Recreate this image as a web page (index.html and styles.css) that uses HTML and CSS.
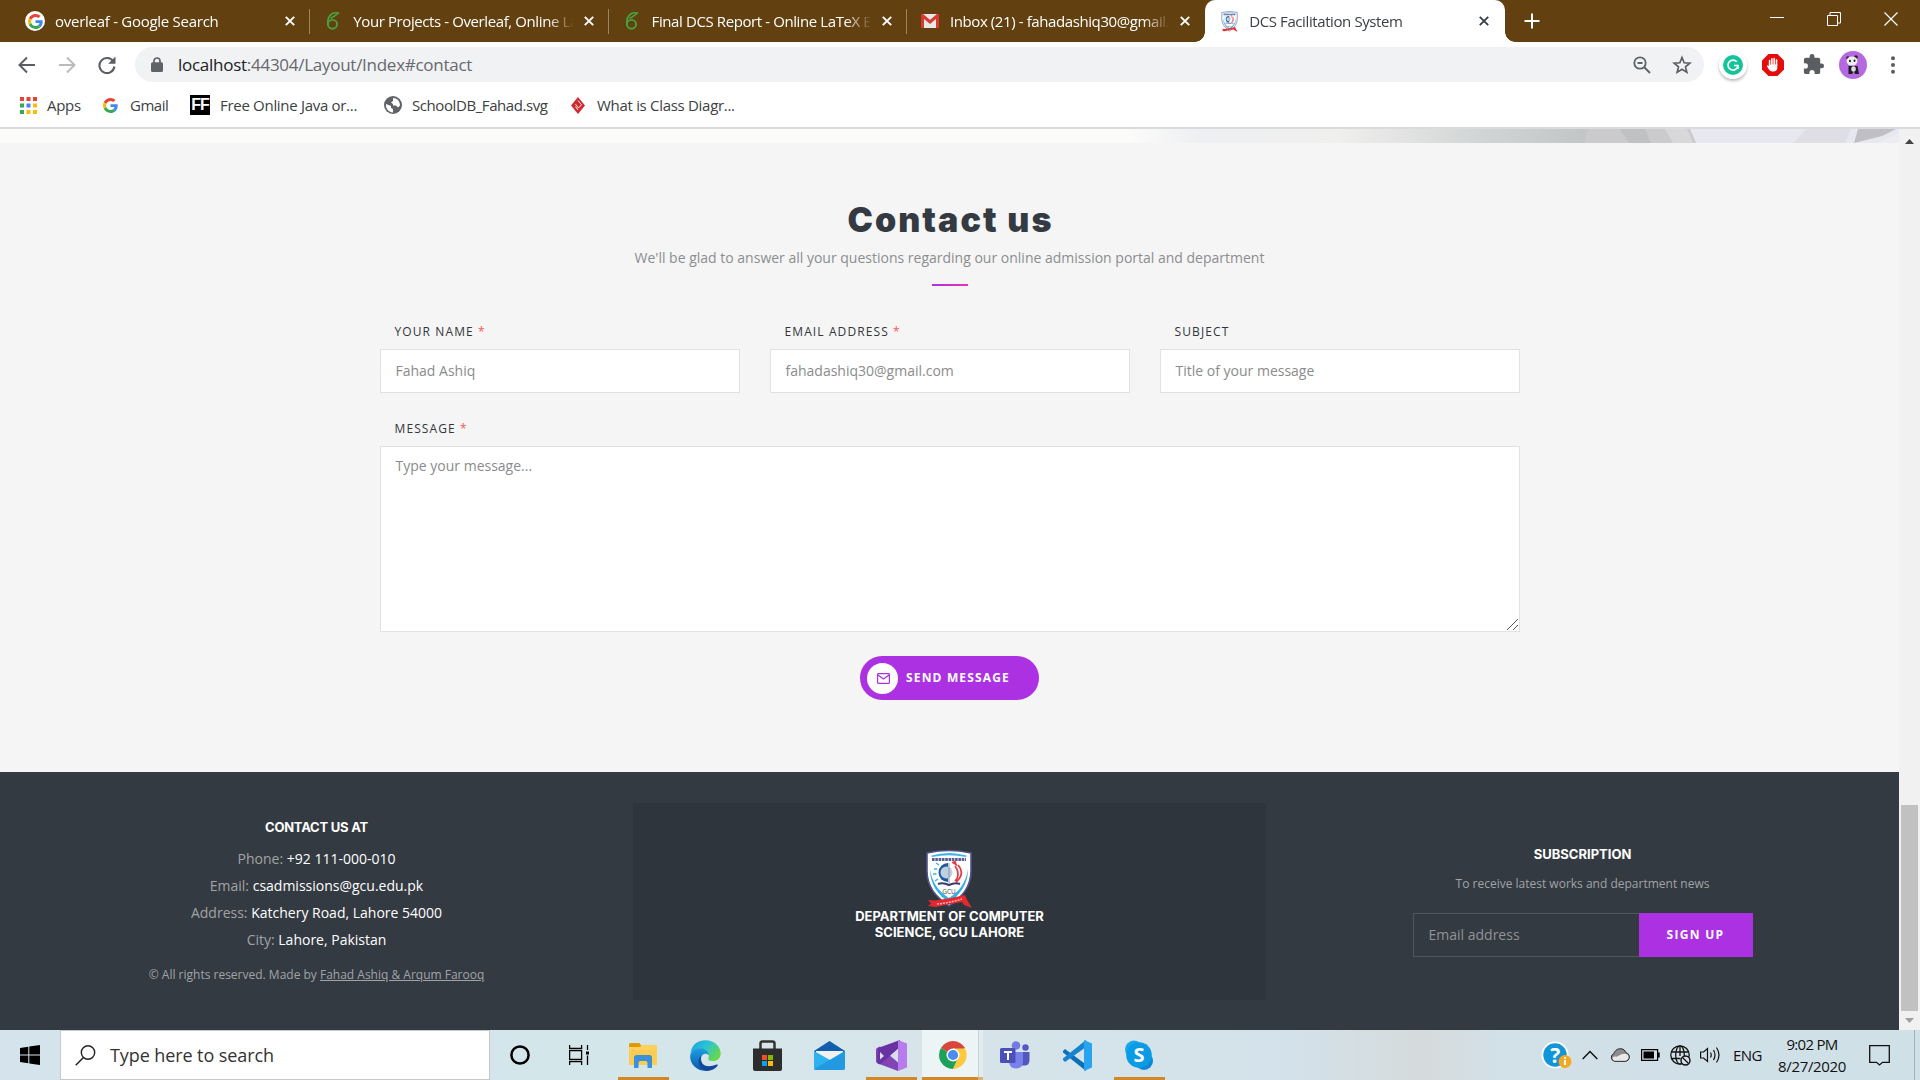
FILE: index.html
```html
<!DOCTYPE html>
<html lang="en">
<head>
<meta charset="utf-8">
<title>DCS Facilitation System</title>
<link rel="stylesheet" href="styles.css">
</head>
<body>
<svg class="defs" width="0" height="0" aria-hidden="true">
  <symbol id="google" viewBox="0 0 48 48">
    <path fill="#EA4335" d="M24 9.500c3.540 0 6.710 1.220 9.210 3.600l6.850-6.850C35.900 2.380 30.470 0 24 0 14.620 0 6.510 5.380 2.560 13.220l7.980 6.190C12.430 13.720 17.740 9.500 24 9.500z"/>
    <path fill="#4285F4" d="M46.980 24.550c0-1.570-.15-3.090-.38-4.550H24v9.020h12.940c-.58 2.960-2.260 5.480-4.780 7.180l7.730 6c4.510-4.180 7.090-10.360 7.090-17.650z"/>
    <path fill="#FBBC05" d="M10.530 28.590c-.48-1.450-.76-2.990-.76-4.590s.27-3.140.76-4.590l-7.980-6.190C.92 16.460 0 20.120 0 24c0 3.880.92 7.540 2.560 10.780l7.970-6.190z"/>
    <path fill="#34A853" d="M24 48c6.480 0 11.930-2.130 15.890-5.810l-7.730-6c-2.150 1.450-4.920 2.300-8.160 2.300-6.260 0-11.570-4.220-13.470-9.910l-7.980 6.190C6.510 42.620 14.620 48 24 48z"/>
  </symbol>
  <symbol id="leaf" viewBox="0 0 20 20">
    <ellipse cx="9.500" cy="13.300" rx="4.600" ry="4.400" fill="none" stroke="#47a141" stroke-width="1.900"/>
    <path d="M4.900 13.500C4.500 9.500 5.500 5 9 2.800 11 1.600 13.500 1.600 16 2c-2.500.6-3.500 3.200-8.500 5.200" fill="none" stroke="#47a141" stroke-width="1.700"/>
  </symbol>
  <symbol id="x" viewBox="0 0 10 10"><path d="M.8.8l8.400 8.400M9.200.8L.8 9.200" stroke="currentColor" stroke-width="1.900"/></symbol>
  <symbol id="crest" viewBox="0 0 48 60">
    <path d="M2 4Q24-1 46 4V22C46 38 37 48 24 57 11 48 2 38 2 22Z" fill="#fff" stroke="#53508c" stroke-width="1.600"/>
    <path d="M6.500 6.500Q24 1.500 41.500 6.500l-.3 1.500Q24 4.500 6.800 8z" fill="#3db4e6"/>
    <path d="M5 20c0 16 8 25 19 34 11-9 19-18 19-34-2 13-8 22-19 29C13 42 7 33 5 20z" fill="#36b0e5"/>
    <path d="M7 10.500h34" stroke="#5d5a94" stroke-width="3.200" stroke-dasharray="2.600 .7"/>
    <path d="M23 14a9.500 9.500 0 0 0 0 19z" fill="#245a98"/>
    <circle cx="21.500" cy="23.500" r="6" fill="#bcd0e2"/>
    <path d="M14 16l-3-2M12 20H9M11.500 25H8M13 30l-3 2" stroke="#3db4e6" stroke-width="1.500"/>
    <path d="M24 14v20" stroke="#8897aa"/>
    <path d="M28 13.500l2-1 1 3zM33 16c5 6 4 12-2 17M30 17c4 5 4 11 0 15" fill="none" stroke="#e13c43" stroke-width="1.700"/>
    <path d="M13 35q5-2 11 1 6-3 11-1" stroke="#383b73" stroke-width="2" fill="none"/>
    <text x="24" y="44.500" text-anchor="middle" class="crest-name">GCU</text>
    <path d="M3 51l7 .5Q24 50 40 46l2 5 5 8-8-3-2-3Q24 55 11 58l-8-1 3-2.500z" fill="#e4282f"/>
    <path d="M12 55q12-1 25-5" stroke="#ffb7b7" stroke-width="1.500" stroke-dasharray="2 1" fill="none"/>
  </symbol>
</svg>

<header class="browser">
  <div class="tabstrip">
    <div class="tab"><span class="fav round"><svg width="15" height="15"><use href="#google"/></svg></span><span class="tab-title wide">overleaf - Google Search</span><svg class="tab-x" width="10" height="10"><use href="#x"/></svg></div>
    <div class="tab"><span class="fav"><svg width="20" height="20"><use href="#leaf"/></svg></span><span class="tab-title">Your Projects - Overleaf, Online LaTeX Editor</span><svg class="tab-x" width="10" height="10"><use href="#x"/></svg></div>
    <div class="tab"><span class="fav"><svg width="20" height="20"><use href="#leaf"/></svg></span><span class="tab-title">Final DCS Report - Online LaTeX Editor</span><svg class="tab-x" width="10" height="10"><use href="#x"/></svg></div>
    <div class="tab last"><span class="fav"><svg width="18" height="14" viewBox="0 0 18 14"><path d="M0 0h18v14H0z" fill="#e8e8e8"/><path d="M1.500 14V1.500L9 8l7.500-6.500V14" fill="none" stroke="#d93a30" stroke-width="3"/></svg></span><span class="tab-title">Inbox (21) - fahadashiq30@gmail.com</span><svg class="tab-x" width="10" height="10"><use href="#x"/></svg></div>
    <div class="tab active"><span class="fav"><svg width="17" height="21"><use href="#crest"/></svg></span><span class="tab-title">DCS Facilitation System</span><svg class="tab-x" width="10" height="10"><use href="#x"/></svg></div>
    <svg class="newtab" width="16" height="16" viewBox="0 0 16 16"><path d="M8 .5v15M.5 8h15" stroke="#fff" stroke-width="2"/></svg>
    <div class="win">
      <svg width="14" height="14" viewBox="0 0 14 14"><path d="M0 5.500h14" stroke="#fff"/></svg>
      <svg width="14" height="14" viewBox="0 0 14 14"><path d="M.5 3.500h10v10H.5zM3 3V.5h10.500V11H11" fill="none" stroke="#fff"/></svg>
      <svg width="14" height="14" viewBox="0 0 14 14"><path d="M.5.5l13 13M13.500.5l-13 13" stroke="#fff" stroke-width="1.200"/></svg>
    </div>
  </div>
  <div class="toolbar">
    <span class="tool"><svg width="18" height="18" viewBox="0 0 18 18"><path d="M17 9H2M9 1.500L1.500 9 9 16.500" fill="none" stroke="#5a5e63" stroke-width="2"/></svg></span>
    <span class="tool"><svg width="18" height="18" viewBox="0 0 18 18"><path d="M1 9h15M9 1.500L16.500 9 9 16.500" fill="none" stroke="#b9bbbe" stroke-width="2"/></svg></span>
    <span class="tool"><svg width="18" height="18" viewBox="0 0 18 18"><path d="M15.300 5.500A7.500 7.500 0 1 0 16.400 10.500" fill="none" stroke="#5a5e63" stroke-width="2.100"/><path d="M17.500.5v7.300h-7.300z" fill="#5a5e63"/></svg></span>
    <div class="omnibox">
      <svg width="12" height="15" viewBox="0 0 12 15"><path d="M3 6V4a3 3 0 0 1 6 0v2" fill="none" stroke="#5f6368" stroke-width="1.700"/><rect y="5.300" width="12" height="9.700" rx="1.500" fill="#5f6368"/></svg>
      <span class="url"><b>localhost</b>:44304/Layout/Index#contact</span>
      <svg width="18" height="18" viewBox="0 0 18 18"><circle cx="7" cy="7" r="5.700" fill="none" stroke="#5f6368" stroke-width="1.800"/><path d="M4.500 7h5M11 11l6 6" stroke="#5f6368" stroke-width="1.900"/></svg>
      <svg class="star" width="20" height="20" viewBox="0 0 24 24"><path d="M12 3l2.600 6.300 6.800.5-5.200 4.400 1.600 6.600L12 17.200l-5.800 3.600 1.600-6.600L2.600 9.800l6.800-.5z" fill="none" stroke="#5a5e63" stroke-width="2"/></svg>
    </div>
    <span class="tool"><svg class="gram" width="28" height="28" viewBox="0 0 28 28"><circle cx="14" cy="14" r="14" fill="#fff"/><circle cx="14" cy="14" r="10" fill="#15c39a"/><path d="M17.800 10.800A5 5 0 1 0 19 14.500h-4M19 14.500V18" fill="none" stroke="#fff" stroke-width="1.700"/></svg></span>
    <span class="tool"><svg width="22" height="22" viewBox="0 0 22 22"><path d="M6.500 0h9L22 6.500v9L15.500 22h-9L0 15.500v-9z" fill="#e60c0c"/><path d="M7.600 12V6.500M9.900 11V4.800M12.200 11V4.500M14.500 11.500V6" stroke="#fff" stroke-width="1.600" stroke-linecap="round"/><path d="M6.800 10.500h8.500v4q-.5 3-4 3c-3 0-4-1-6.500-5.500l1-.7 1.500 1.200z" fill="#fff"/></svg></span>
    <span class="tool"><svg width="23" height="23" viewBox="0 0 24 24"><path d="M20.500 11H19V7a2 2 0 0 0-2-2h-4V3.500a2.500 2.500 0 0 0-5 0V5H4a2 2 0 0 0-2 2v3.800h1.500a2.700 2.700 0 0 1 0 5.400H2V20c0 1.100.9 2 2 2h3.800v-1.500a2.700 2.700 0 0 1 5.400 0V22H17a2 2 0 0 0 2-2v-4h1.500a2.500 2.500 0 0 0 0-5z" fill="#5a5e63"/></svg></span>
    <span class="tool"><svg width="28" height="28" viewBox="0 0 28 28"><circle cx="14" cy="14" r="14" fill="#b569e0"/><circle cx="9" cy="7" r="1.800" fill="#222"/><circle cx="17" cy="6" r="1.800" fill="#222"/><ellipse cx="13" cy="10" rx="5.500" ry="4.600" fill="#eee"/><ellipse cx="11" cy="10" rx="1" ry="1.300" fill="#222"/><ellipse cx="15.500" cy="9.700" rx="1" ry="1.300" fill="#222"/><path d="M9.500 15h9l1.500 8h-4l-1-3-2 3H9.500z" fill="#1d1d25"/><ellipse cx="14.500" cy="18" rx="2.300" ry="2.800" fill="#ddd"/></svg></span>
    <span class="tool"><svg width="4" height="18" viewBox="0 0 4 18"><g fill="#5a5e63"><circle cx="2" cy="2.300" r="2"/><circle cx="2" cy="9" r="2"/><circle cx="2" cy="15.700" r="2"/></g></svg></span>
  </div>
  <nav class="bookmarks">
    <a class="bm apps"><svg width="17" height="17" viewBox="0 0 17 17"><path d="M0 0h4v4H0zM6.500 0h4v4h-4zM13 0h4v4h-4z" fill="#ea4335"/><path d="M0 6.500h4v4H0z" fill="#34a853"/><path d="M6.500 6.500h4v4h-4z" fill="#4285f4"/><path d="M13 6.500h4v4h-4z" fill="#fbbc05"/><path d="M0 13h4v4H0z" fill="#34a853"/><path d="M6.500 13h4v4h-4zM13 13h4v4h-4z" fill="#fbbc05"/></svg><span>Apps</span></a>
    <a class="bm gmail"><svg width="15" height="15"><use href="#google"/></svg><span>Gmail</span></a>
    <a class="bm ff"><em>FF</em><span>Free Online Java or...</span></a>
    <a class="bm school"><svg width="18" height="18" viewBox="0 0 18 18"><circle cx="9" cy="9" r="9" fill="#5f6368"/><path d="M2 8l5 2v2l2 1v3.500C4 16 1.500 12 2 8zM9 2c4 0 7 3 7 7.500l-2 2-2-2h-3V8L7 6.500 9 5z" fill="#fff"/></svg><span>SchoolDB_Fahad.svg</span></a>
    <a class="bm diagr"><svg width="14" height="17" viewBox="0 0 14 17"><path d="M7 0l7 8.500L7 17 0 8.500z" fill="#cf2a2f"/><path d="M7 3.500l3.500 4.300L7.500 11 4.500 7.200M4.500 9.500L7 13" stroke="#fff" fill="none" stroke-width=".9"/></svg><span>What is Class Diagr...</span></a>
  </nav>
</header>

<div class="viewport">
  <div class="page">
    <svg class="banner" width="1899" height="14" viewBox="0 0 1899 14">
      <defs><linearGradient id="sky" gradientUnits="userSpaceOnUse" x1="0" x2="1899" y1="0" y2="0"><stop offset=".595" stop-color="#fbfbfa"/><stop offset=".632" stop-color="#eeeff2"/><stop offset=".705" stop-color="#efefed"/><stop offset=".779" stop-color="#d2d5d5"/><stop offset=".834" stop-color="#c3c6c6"/></linearGradient></defs>
      <path d="M0 0h1899v14H0z" fill="url(#sky)"/>
      <path d="M1588 0h102l6 14h-112z" fill="#cbcbcd"/><path d="M1620 0h25l6 14h-22z" fill="#c0c1c3"/><path d="M1665 0h22l6 14h-20z" fill="#d8d7da"/>
      <path d="M1690 0h209v14h-203z" fill="#e7e7ef"/><path d="M1806 0h45l-6 14h-51z" fill="#dedee4"/><path d="M1858 0h38l-14 7-28 7z" fill="#c0bfc5"/><path d="M1899 4v10h-22z" fill="#ececf2"/>
    </svg>
    <main class="contact">
      <h1>Contact us</h1>
      <p class="lead">We'll be glad to answer all your questions regarding our online admission portal and department</p>
      <div class="rule"></div>
      <form class="form">
        <div class="fields">
          <label class="field"><span class="label">YOUR NAME <b>*</b></span><span class="box">Fahad Ashiq</span></label>
          <label class="field"><span class="label">EMAIL ADDRESS <b>*</b></span><span class="box">fahadashiq30@gmail.com</span></label>
          <label class="field"><span class="label">SUBJECT</span><span class="box">Title of your message</span></label>
        </div>
        <label class="field msg"><span class="label">MESSAGE <b>*</b></span><span class="box area">Type your message...<svg width="11" height="11" viewBox="0 0 11 11"><path d="M0 11L11 0M6 11l5-5" stroke="#555"/></svg></span></label>
        <button type="button" class="send"><span class="send-icon"><svg width="13" height="11" viewBox="0 0 13 11"><rect x=".6" y=".6" width="11.800" height="9.800" rx=".8" fill="none" stroke="#ab31e3" stroke-width="1.200"/><path d="M1 2l5.500 4L12 2" fill="none" stroke="#ab31e3" stroke-width="1.200"/></svg></span><span class="send-text">SEND MESSAGE</span></button>
      </form>
    </main>
    <footer class="footer">
      <section class="info">
        <h2>CONTACT US AT</h2>
        <p>Phone: <b>+92 111-000-010</b></p>
        <p>Email: <b>csadmissions@gcu.edu.pk</b></p>
        <p>Address: <b>Katchery Road, Lahore 54000</b></p>
        <p>City: <b>Lahore, Pakistan</b></p>
        <small>© All rights reserved. Made by <u>Fahad Ashiq &amp; Arqum Farooq</u></small>
      </section>
      <section class="dept">
        <svg width="48" height="60"><use href="#crest"/></svg>
        <h2>DEPARTMENT OF COMPUTER<br>SCIENCE, GCU LAHORE</h2>
      </section>
      <section class="subscribe">
        <h2>SUBSCRIPTION</h2>
        <small>To receive latest works and department news</small>
        <div class="signup"><span class="mail">Email address</span><button type="button">SIGN UP</button></div>
      </section>
    </footer>
  </div>
  <div class="scrollbar">
    <svg width="9" height="5" viewBox="0 0 9 5"><path d="M4.500 0L9 5H0z" fill="#444"/></svg>
    <div class="thumb"></div>
    <svg width="9" height="5" viewBox="0 0 9 5"><path d="M4.500 5L9 0H0z" fill="#a0a0a0"/></svg>
  </div>
</div>

<div class="taskbar">
  <span class="start"><svg width="20" height="20" viewBox="0 0 20 20"><path d="M0 3l8.300-1.200v7.700H0zM9.300 1.600L20 0v9.500H9.300zM0 10.500h8.300v7.700L0 17zM9.300 10.500H20V20L9.300 18.400z"/></svg></span>
  <div class="search"><svg width="21" height="21" viewBox="0 0 21 21"><circle cx="13" cy="7.500" r="6.700" fill="none" stroke="#222" stroke-width="1.400"/><path d="M8.500 12.500L.7 20.300" stroke="#222" stroke-width="1.500"/></svg><span>Type here to search</span></div>
  <div class="apps-row">
    <span class="app cortana"><svg width="20" height="20" viewBox="0 0 20 20"><circle cx="10" cy="10" r="8.600" fill="none" stroke="#000" stroke-width="2.500"/></svg></span>
    <span class="app views"><svg width="21" height="20" viewBox="0 0 21 20"><path d="M.6 0v3.400h12V0M.6 5.500h12v9H.6zM.6 20v-3.400h12V20M18.500 0v5M18.500 10.500V20" fill="none" stroke="#000" stroke-width="1.300"/><path d="M17 6.500h3v3h-3z"/></svg></span>
    <span class="app run"><svg width="28" height="26" viewBox="0 0 28 26"><path d="M0 2.500Q0 1 1.500 1h9L13 5H0z" fill="#e09a08"/><path d="M0 5h11l2-2h15v20H0z" fill="#ffd15c"/><path d="M0 8h28v15H0z" fill="#fdc849" opacity=".6"/><path d="M5 26V15.500Q5 13 7.500 13h13q2.500 0 2.500 2.500V26h-4.500v-5q0-2-2-2h-5q-2 0-2 2v5z" fill="#3b91d9"/></svg></span>
    <span class="app"><svg width="31" height="31" viewBox="0 0 31 31"><defs><linearGradient id="e1" x1="0" y1="0" x2="1" y2=".6"><stop offset="0" stop-color="#1b9de2"/><stop offset=".5" stop-color="#2bc3d2"/><stop offset="1" stop-color="#66d94d"/></linearGradient><linearGradient id="e2" x1="0" y1="0" x2="0" y2="1"><stop offset="0" stop-color="#1ba0e1"/><stop offset="1" stop-color="#0a58aa"/></linearGradient></defs><path d="M.5 13C2 4 8 .3 15.500.3 25 .3 30.700 7 30.700 13.500c0 5-3.500 7.500-7.700 7.500-4 0-5.500-1.500-4.500-3.500C20 14 18 10 12.500 9 7 8 2.500 10 .5 13z" fill="url(#e1)"/><path d="M.3 15C1.500 10 6 8 10.500 8.300c5 .3 8.500 3.400 8.500 7-3-3.300-8-1.500-8 4 0 6 6.500 10 13.500 8.200C22 30 19 30.800 15.500 30.800 6 30.800-.8 23 .3 15z" fill="url(#e2)"/><path d="M11 19c-.3 6 6 9.500 15.500 5.500 1-.4 1.700.3 1 1.300-3.500 4.500-8 5.200-12 5-7-2-9-11-4.500-15z" fill="#11499b"/></svg></span>
    <span class="app"><svg width="29" height="31" viewBox="0 0 29 31"><path d="M7.500 10V3.500Q7.500 1.500 9.500 1.500h10q2 0 2 2V10" fill="none" stroke="#333" stroke-width="2.500"/><path d="M0 8.500h29V29q0 2-2 2H2q-2 0-2-2z" fill="#2d2d2d"/><path d="M9 15h5v5H9z" fill="#f25022"/><path d="M15 15h5v5h-5z" fill="#7fba00"/><path d="M9 21h5v5H9z" fill="#00a4ef"/><path d="M15 21h5v5h-5z" fill="#ffb900"/></svg></span>
    <span class="app"><svg width="31" height="29" viewBox="0 0 31 29"><path d="M0 10L15.500 0 31 10v5H0z" fill="#0f5fae"/><path d="M2 10h27v9H2z" fill="#f1f1f1"/><path d="M0 10l16 9L31 10v17q0 2-2 2H2q-2 0-2-2z" fill="#2fb1ee"/><path d="M0 28L31 10v17q0 2-2 2H1z" fill="#1f92dc" opacity=".75"/></svg></span>
    <span class="app run"><svg width="31" height="31" viewBox="0 0 31 31"><path d="M1 8l3-1.500 18 16V31L2 23.500 0 22V9z" fill="#8244b5"/><path d="M1 23l3 1.500L24 7V0L2 8z" fill="#6932a2"/><path d="M4 12v7.500L8 16z" fill="#d6dfeb"/><path d="M22 0l9 3.500v24L22 31z" fill="#b77bee"/><path d="M22 9.500v12L14.500 16z" fill="#d6dfeb"/></svg></span>
    <span class="app current"><svg width="28" height="28" viewBox="0 0 28 28"><path d="M14 14L1.900 7A14 14 0 0 1 26.100 7z" fill="#d8473c"/><path d="M14 14L1.900 7A14 14 0 0 0 14 28l6-10.500z" fill="#1da05a"/><path d="M14 14h6l-6 14A14 14 0 0 0 26.100 7.500H14z" fill="#fcca3f"/><circle cx="14" cy="14" r="6.500" fill="#fff"/><circle cx="14" cy="14" r="5.100" fill="#4b8bf4"/></svg></span>
    <span class="app"><svg width="30" height="28" viewBox="0 0 30 28"><circle cx="16" cy="4.500" r="4.300" fill="#7579e2"/><circle cx="25.500" cy="6.500" r="3.200" fill="#5558c0"/><path d="M20 11h9.500v8q0 5.500-5 5.500H20z" fill="#5257bd"/><path d="M9 11h14v9q0 7.500-7 7.500T9 20z" fill="#7b81eb"/><rect y="7" width="15.500" height="15" rx="1.500" fill="#4a50b8"/><path d="M4 11h8M8 11v8" stroke="#fff" stroke-width="2"/></svg></span>
    <span class="app"><svg width="30" height="31" viewBox="0 0 30 31"><path d="M1 11l2-2 21 15.500V31L1 12.500z" fill="#0d6fb8"/><path d="M1 20l2 2L24 7V0L1 18.500z" fill="#1583cf"/><path d="M22 0l8 3.500v24L22 31z" fill="#29a4f0"/></svg></span>
    <span class="app run"><svg width="28" height="30" viewBox="0 0 28 30"><circle cx="9" cy="9.500" r="9" fill="#16a9ea"/><circle cx="19" cy="21" r="9" fill="#0b87d8"/><circle cx="14" cy="15" r="12.800" fill="#099ce4"/><text x="14" y="22" text-anchor="middle" class="skype-s">S</text></svg></span>
  </div>
  <div class="tray">
    <span class="cell help"><svg width="32" height="30" viewBox="0 0 32 30"><circle cx="14" cy="14" r="13.500" fill="#fff"/><circle cx="14" cy="14" r="11.700" fill="#1194d8"/><text x="14" y="21.500" text-anchor="middle" class="help-q">?</text><circle cx="24" cy="20.500" r="6.500" fill="#f6a821"/><path d="M24 19v5M24 16v1.800" stroke="#fff" stroke-width="2"/></svg></span>
    <span class="cell"><svg width="16" height="10" viewBox="0 0 16 10"><path d="M.7 9L8 1.500 15.300 9" fill="none" stroke="#111" stroke-width="1.500"/></svg></span>
    <span class="cell"><svg width="20" height="14" viewBox="0 0 20 14"><path d="M4.500 13.300a4 4 0 0 1-.7-7.600C5 2 8 .7 10.500.7c3 0 4.700 1.800 5.300 4 2 .3 3.500 2 3.500 4.300 0 2.500-1.800 4.300-4 4.300z" fill="#8d8d8d" stroke="#222"/><path d="M4.500 12.800q-2.500-1-2-3 1.500-2 4-1l5-2.500q2-1 4-.5 3 .8 3 3.500t-3.500 3.500z" fill="#e9e9e9"/></svg></span>
    <span class="cell"><svg width="19" height="12" viewBox="0 0 19 12"><path d="M.6.6h16v10.800H.6z" fill="none" stroke="#000" stroke-width="1.200"/><path d="M2.500 2.500H13v7H2.500zM17 3.500h1.700v5H17z"/></svg></span>
    <span class="cell"><svg width="21" height="21" viewBox="0 0 21 21"><g fill="none" stroke="#111" stroke-width="1.300"><circle cx="10" cy="10" r="9.200"/><ellipse cx="10" cy="10" rx="4.300" ry="9.200"/><path d="M1.500 7h17M1.500 13.500h9M10 1v10"/></g><circle cx="15.500" cy="15.500" r="4.500" fill="#d2e0e7" stroke="#111" stroke-width="1.400"/><path d="M12.500 12.500l6 6" stroke="#111" stroke-width="1.300"/></svg></span>
    <span class="cell"><svg width="21" height="18" viewBox="0 0 21 18"><path d="M.6 6h3L7.500 2.500v13L3.600 12h-3z" fill="none" stroke="#111" stroke-width="1.200"/><path d="M10.500 6.500q1.500 2.500 0 5M13.500 4q3 5 0 10M16.500 1.500q5 7.500 0 15" fill="none" stroke="#111" stroke-width="1.200"/></svg></span>
    <span class="cell lang">ENG</span>
    <span class="clock"><span class="time">9:02 PM</span><span>8/27/2020</span></span>
    <span class="cell note"><svg width="21" height="21" viewBox="0 0 21 21"><path d="M.7.700h19.600v16.600H13.500L10.500 20l-3-2.700H.7z" fill="none" stroke="#111" stroke-width="1.300"/></svg></span>
    <span class="peek"></span>
  </div>
</div>
</body>
</html>
```
FILE: styles.css
```css
* { box-sizing: border-box; }
body { margin: 0; width: 1920px; height: 1080px; overflow: hidden; display: flex; flex-direction: column; font-family: "Open Sans", "Noto Sans", sans-serif; background: #f5f5f5; }
svg { display: block; flex: none; }
em { font-style: normal; }
h1, h2, p { margin: 0; }
.defs { position: absolute; }
.crest-name { font: 6.500px "Open Sans", sans-serif; fill: #444; }

/* browser chrome */
.browser { height: 129px; background: #fff; border-bottom: 2px solid #d9dbde; flex: none; }
.tabstrip { height: 42px; background: #63400f; display: flex; padding-left: 12px; }
.tab { flex: none; width: 298.300px; height: 42px; display: flex; align-items: center; padding: 0 15px 0 13px; color: #fff; position: relative; }
.tab:not(.active):not(.last)::after { content: ""; position: absolute; right: 0; top: 9px; width: 1px; height: 25px; background: #9b8462; }
.fav { width: 20px; height: 20px; display: grid; place-items: center; flex: none; }
.round { background: #fff; border-radius: 50%; }
.tab-title { flex: 1; margin: 0 10px; padding-bottom: 1px; overflow: hidden; white-space: nowrap; font-size: 15px; line-height: 24px; letter-spacing: -.4px; -webkit-mask-image: linear-gradient(90deg, #000 88%, transparent); mask-image: linear-gradient(90deg, #000 88%, transparent); }
.wide { letter-spacing: -.27px; }
.active { width: 300px; background: #fff; color: #3c4043; border-radius: 10px 10px 0 0; padding-left: 14px; padding-right: 16px; }
.active::before, .active::after { content: ""; position: absolute; bottom: 0; width: 10px; height: 10px; }
.active::before { left: -10px; background: radial-gradient(circle at 0 0, transparent 9.500px, #fff 10px); }
.active::after { right: -10px; background: radial-gradient(circle at 100% 0, transparent 9.500px, #fff 10px); }
.newtab { margin: 13px 0 0 19px; }
.win { margin: 12px 22px 0 auto; display: flex; gap: 43px; }
.toolbar { height: 45px; display: flex; align-items: center; padding-left: 7px; }
.tool { width: 40px; flex: none; display: grid; place-items: center; }
.gram { border-radius: 50%; box-shadow: 0 2px 3px #0004; }
.omnibox { width: 1569px; height: 35px; margin: 0 9px 0 8px; border-radius: 18px; background: #f1f2f4; display: flex; align-items: center; padding: 0 12px 0 16px; }
.url { margin: 0 auto 0 15px; font-size: 17px; letter-spacing: -.27px; color: #66696d; }
.url b { font-weight: 400; color: #202124; }
.star { margin-left: 21px; }
.bookmarks { height: 36px; display: flex; align-items: center; font-size: 15px; letter-spacing: -.3px; color: #3c4043; padding-left: 20px; }
.bm { display: flex; align-items: center; white-space: nowrap; flex: none; }
.bm span { padding-bottom: 1px; }
.apps { width: 83px; gap: 10px; }
.gmail { width: 87px; gap: 12px; letter-spacing: -.5px; }
.ff { width: 194px; gap: 10px; }
.ff em { width: 20px; height: 20px; background: #000; color: #fff; font: 700 16px/20px "Liberation Sans", sans-serif; text-align: center; letter-spacing: -1px; }
.school { width: 187px; gap: 10px; letter-spacing: -.42px; }
.diagr { gap: 12px; }

/* page */
.viewport { flex: 1; display: flex; min-height: 0; }
.page { width: 1899px; display: flex; flex-direction: column; }
.contact { height: 629px; background: #f5f5f5; display: flex; flex-direction: column; align-items: center; padding-top: 52px; }
h1 { font: 900 34px/50px Inter, "Open Sans", sans-serif; letter-spacing: 2.030px; margin-right: -2px; color: #343a42; white-space: nowrap; }
.lead { font-size: 14px; line-height: 24px; padding-top: 1px; color: #8c8d8f; white-space: nowrap; }
.rule { width: 36px; height: 2px; margin-top: 14px; background: linear-gradient(90deg, #ab31e3, #e833b0); }
.form { width: 1140px; margin-top: 34px; display: flex; flex-direction: column; align-items: center; }
.fields { width: 100%; display: grid; grid-template-columns: repeat(3, 360px); gap: 30px; }
.field { display: flex; flex-direction: column; }
.label { height: 29px; line-height: 24px; padding-left: 15px; font-size: 12px; letter-spacing: 1.100px; color: #33363a; }
.label b { color: #ff5a52; font-weight: 400; }
.box { height: 44px; border: 1px solid #e1e1e1; background: #fff; padding: 0 15px; font-size: 14px; line-height: 42px; color: #8a8b8c; }
.msg { width: 100%; margin-top: 24px; }
.area { height: 186px; line-height: 38px; display: flex; justify-content: space-between; padding-right: 1px; }
.area svg { align-self: flex-end; margin-bottom: 1px; }
.send { margin-top: 24px; width: 179px; height: 44px; border: 0; border-radius: 22px; background: #ab31e3; color: #fff; display: flex; align-items: center; padding: 0 0 0 7px; font: 700 12px "Open Sans", sans-serif; letter-spacing: 1.160px; white-space: nowrap; }
.send-icon { width: 31px; height: 31px; border-radius: 50%; background: #fff; display: grid; place-items: center; margin-right: 8px; padding-left: 1px; }
.send-text { padding-bottom: 1px; }

.footer { height: 258px; background: #343a42; display: grid; grid-template-columns: 633px 633px 633px; color: #fff; text-align: center; }
h2 { font: 700 13px/16px Inter, "Open Sans", sans-serif; white-space: nowrap; }
.info { padding-top: 47px; display: flex; flex-direction: column; align-items: center; font-size: 14px; color: #a0a3a6; }
.info h2 { margin-bottom: 10px; color: #fff; letter-spacing: -.23px; }
.info p { line-height: 27px; }
.info b { font-weight: 400; color: #fff; }
small { font-size: 12px; line-height: 24px; color: #a0a3a6; }
.info small { margin-top: 10px; }
.dept { margin-top: 31px; height: 197px; background: #2f353d; display: flex; flex-direction: column; align-items: center; padding-top: 46px; }
.dept svg { margin: 0 1px -1px 0; }
.subscribe { padding-top: 74px; display: flex; flex-direction: column; align-items: center; }
.subscribe small { margin-top: 10px; }
.signup { margin-top: 17px; display: flex; height: 44px; }
.mail { width: 226px; border: 1px solid #50565d; border-right: 0; padding-left: 15px; font-size: 14px; line-height: 42px; text-align: left; color: #909397; }
.signup button { width: 114px; border: 0; background: #ab31e3; color: #fff; font: 700 12px "Open Sans", sans-serif; letter-spacing: 1.300px; padding-bottom: 2px; }
.scrollbar { width: 21px; background: #f1f1f1; display: flex; flex-direction: column; align-items: center; padding: 10px 0 7px; }
.thumb { width: 17px; height: 206px; background: #c1c1c1; margin: auto 0 7px; }

/* taskbar */
.taskbar { height: 50px; flex: none; display: flex; background: linear-gradient(90deg, #d5e4ec, #d3e6ea 620px, #d7e5ea 900px, #d3e1ea 1290px, #d5dbdb 1420px, #d2e0e8 1500px, #cfe0e7); }
.start { width: 60px; display: grid; place-items: center; }
.search { width: 430px; background: #fff; border: 1px solid #c6c9cb; display: flex; align-items: center; gap: 14px; padding-left: 14px; font-size: 18px; color: #333; white-space: nowrap; letter-spacing: -.09px; }
.apps-row { display: flex; }
.app { width: 62px; flex: none; display: grid; place-items: center; }
.cortana { width: 59px; }
.views { width: 60px; margin-right: 3px; }
.run { background: linear-gradient(#d08828, #d08828) 50% 100% / 51px 3px no-repeat; }
.current { background: linear-gradient(90deg, #d08828 56px, #deb178 56px) 0 100% / 61px 3px no-repeat, linear-gradient(90deg, #ecf4f6 56px, #c2d2dc 56px 57px, #e2ecf0 57px 61px, transparent 61px); }
.skype-s { font: 700 20px "Open Sans", sans-serif; fill: #fff; }
.help-q { font: 700 21px "Open Sans", sans-serif; fill: #fff; }
.tray { margin-left: auto; display: flex; font-size: 15px; color: #111; white-space: nowrap; letter-spacing: -.35px; }
.cell { width: 30px; display: grid; place-items: center; }
.help { width: 40px; padding: 2px 0 0 4px; }
.lang { width: 45px; letter-spacing: -.5px; }
.clock { width: 84px; display: flex; flex-direction: column; align-items: center; justify-content: center; line-height: 22px; }
.time { letter-spacing: -.7px; }
.note { width: 50px; }
.peek { width: 6px; margin-left: 10px; border-left: 1px solid #9fb0b8; }
```
